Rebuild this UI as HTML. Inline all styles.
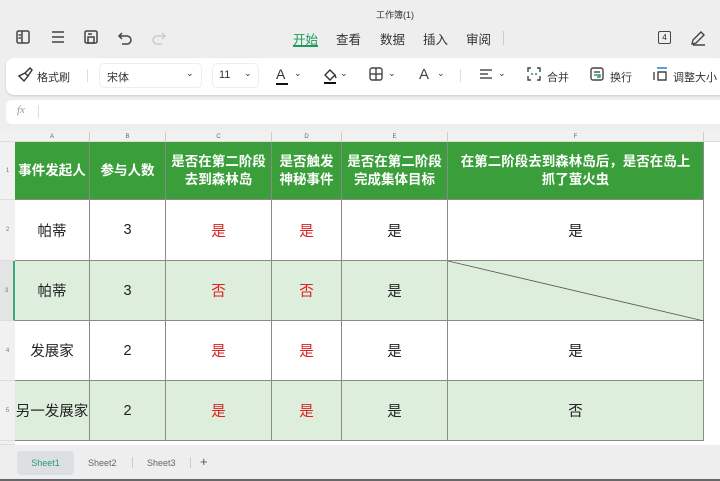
<!DOCTYPE html>
<html><head><meta charset="utf-8"><style>
*{margin:0;padding:0;box-sizing:border-box}
body{width:720px;height:481px;overflow:hidden;background:#eeeeee;font-family:"Liberation Sans","Noto Sans CJK SC",sans-serif;position:relative;color:#222}
.a{position:absolute}
.t{font-size:12px;color:#333}
.grid div.c{position:absolute;display:flex;align-items:center;justify-content:center;text-align:center;border-right:1px solid #8a8a8a;border-bottom:1px solid #8a8a8a;font-size:14.5px}
.h{background:#3a9e3a;color:#fff;font-weight:bold;font-size:13.5px!important;line-height:18px}
.g{background:#ddeedd}
.w{background:#fff}
.r{color:#e02020}
.rh{position:absolute;left:0;width:15px;background:#f1f1f1;border-bottom:1px solid #ddd;font-size:6px;color:#777;display:flex;align-items:center;justify-content:center}
.ch{position:absolute;top:132px;height:10px;font-size:6px;color:#666;text-align:center;border-right:1px solid #ccc;line-height:10px}
</style></head><body>
<div class="a" style="left:0;top:8px;width:790px;text-align:center;font-size:9px;color:#333">工作簿(1)</div>
<svg class="a" style="left:14px;top:27px" width="160" height="20" fill="none" stroke="#444" stroke-width="1.5">
<rect x="3" y="4" width="12" height="12" rx="1.5"/><line x1="8" y1="4" x2="8" y2="16"/><line x1="4.5" y1="8" x2="7" y2="8"/><line x1="4.5" y1="11" x2="7" y2="11"/>
<line x1="38" y1="5" x2="50" y2="5"/><line x1="38" y1="10" x2="50" y2="10"/><line x1="38" y1="15" x2="50" y2="15"/>
<rect x="71" y="4" width="12" height="12" rx="1.5"/><rect x="74" y="10" width="6" height="6"/><line x1="74" y1="7" x2="78" y2="7"/>
<path d="M108 6 L105 9 L108 12 M105 9 H113 a4 4 0 0 1 0 8 H108"/>
<path stroke="#ccc" d="M148 6 L151 9 L148 12 M151 9 H143 a4 4 0 0 0 0 8 H148"/>
</svg>
<div class="a" style="left:293px;top:29px;font-size:12.5px;color:#1e9a5a">开始</div>
<div class="a" style="left:293px;top:45px;width:25px;height:2px;background:#1e9a5a"></div>
<div class="a" style="left:336px;top:29px;font-size:12.5px;color:#333">查看</div>
<div class="a" style="left:380px;top:29px;font-size:12.5px;color:#333">数据</div>
<div class="a" style="left:423px;top:29px;font-size:12.5px;color:#333">插入</div>
<div class="a" style="left:466px;top:29px;font-size:12.5px;color:#333">审阅</div>
<div class="a" style="left:503px;top:31px;width:1px;height:14px;background:#ccc"></div>
<div class="a" style="left:658px;top:31px;width:13px;height:13px;border:1.3px solid #444;border-radius:2px;font-size:8px;text-align:center;line-height:11px">4</div>
<svg class="a" style="left:688px;top:28px" width="20" height="20" fill="none" stroke="#444" stroke-width="1.4"><path d="M4 16 L5 12 L13 4 L16 7 L8 15 Z M5 17 H17"/></svg>
<div class="a" style="left:6px;top:58px;width:720px;height:37px;background:#fff;border-radius:8px;box-shadow:0 1px 2px #ccc"></div>
<svg class="a" style="left:16px;top:66px" width="18" height="18" fill="none" stroke="#333" stroke-width="1.4"><path d="M3 10 L8 15 L12 10 L9 7 Z M9 7 L14 2 L16 4 L12 10"/></svg>
<div class="a t" style="left:37px;top:69px;font-size:11px">格式刷</div>
<div class="a" style="left:87px;top:69px;width:1px;height:13px;background:#ddd"></div>
<div class="a" style="left:99px;top:63px;width:103px;height:25px;border:1px solid #eee;border-radius:5px"></div>
<div class="a t" style="left:107px;top:69px;font-size:11px">宋体</div>
<div class="a t" style="left:186px;top:68px;font-size:9px">⌄</div>
<div class="a" style="left:212px;top:63px;width:47px;height:25px;border:1px solid #eee;border-radius:5px"></div>
<div class="a t" style="left:219px;top:69px;font-size:11px">11</div>
<div class="a t" style="left:244px;top:68px;font-size:9px">⌄</div>
<div class="a" style="left:276px;top:66px;font-size:14px;color:#333">A</div>
<div class="a" style="left:276px;top:83px;width:12px;height:2px;background:#111"></div>
<div class="a t" style="left:294px;top:68px;font-size:9px">⌄</div>
<svg class="a" style="left:321px;top:66px" width="18" height="20" fill="none" stroke="#333" stroke-width="1.4"><path d="M4 9 L9 4 L14 9 L9 14 Z M14 9 l1 3"/><rect x="3" y="16" width="12" height="2" fill="#111" stroke="none"/></svg>
<div class="a t" style="left:340px;top:68px;font-size:9px">⌄</div>
<svg class="a" style="left:368px;top:66px" width="16" height="16" fill="none" stroke="#444" stroke-width="1.4"><rect x="2" y="2" width="12" height="12" rx="2"/><line x1="8" y1="2" x2="8" y2="14"/><line x1="2" y1="8" x2="14" y2="8"/></svg>
<div class="a t" style="left:388px;top:68px;font-size:9px">⌄</div>
<div class="a" style="left:419px;top:66px;font-size:15px;color:#444">A</div>
<div class="a t" style="left:437px;top:68px;font-size:9px">⌄</div>
<div class="a" style="left:460px;top:69px;width:1px;height:13px;background:#ddd"></div>
<svg class="a" style="left:478px;top:66px" width="16" height="16" stroke="#444" stroke-width="1.4"><line x1="2" y1="4" x2="14" y2="4"/><line x1="2" y1="8" x2="10" y2="8"/><line x1="2" y1="12" x2="14" y2="12"/></svg>
<div class="a t" style="left:498px;top:68px;font-size:9px">⌄</div>
<svg class="a" style="left:526px;top:66px" width="16" height="16" fill="none" stroke="#444" stroke-width="1.4"><path d="M5 2 H2 V6 M11 2 H14 V6 M2 10 V14 H5 M14 10 V14 H11"/><circle cx="6" cy="8" r="1" fill="#1e9a5a" stroke="none"/><circle cx="10" cy="8" r="1" fill="#1e9a5a" stroke="none"/></svg>
<div class="a t" style="left:547px;top:69px;font-size:11px">合并</div>
<svg class="a" style="left:589px;top:66px" width="16" height="16" fill="none" stroke="#444" stroke-width="1.4"><rect x="2" y="2" width="12" height="12" rx="2"/><line x1="5" y1="6" x2="11" y2="6"/><path d="M5 9 H11 V11 H8" stroke="#1e9a5a"/></svg>
<div class="a t" style="left:610px;top:69px;font-size:11px">换行</div>
<svg class="a" style="left:652px;top:66px" width="18" height="16" fill="none" stroke="#444" stroke-width="1.4"><path d="M2 6 V14 M6 6 H14 V14 H6 Z" /><line x1="5" y1="2" x2="15" y2="2" stroke="#1e6fd0"/></svg>
<div class="a t" style="left:673px;top:69px;font-size:11px">调整大小</div>
<div class="a" style="left:6px;top:100px;width:720px;height:24px;background:#fff;border-radius:6px"></div>
<div class="a" style="left:17px;top:104px;font-size:11px;color:#999;font-style:italic;font-family:'Liberation Serif',serif">fx</div>
<div class="a" style="left:38px;top:105px;width:1px;height:13px;background:#ddd"></div>
<div class="a" style="left:0;top:131px;width:720px;height:314px;background:#fff"></div>
<div class="a" style="left:0;top:131px;width:720px;height:11px;background:#f1f1f1;border-bottom:1px solid #ddd"></div>
<div class="ch" style="left:15px;width:75px">A</div>
<div class="ch" style="left:90px;width:76px">B</div>
<div class="ch" style="left:166px;width:106px">C</div>
<div class="ch" style="left:272px;width:70px">D</div>
<div class="ch" style="left:342px;width:106px">E</div>
<div class="ch" style="left:448px;width:256px">F</div>
<div class="rh" style="top:142px;height:58px">1</div>
<div class="rh" style="top:200px;height:61px">2</div>
<div class="rh" style="top:261px;height:60px;background:#e4e4e4;border-right:2px solid #3aaa7a">3</div>
<div class="rh" style="top:321px;height:60px">4</div>
<div class="rh" style="top:381px;height:60px">5</div>
<div class="rh" style="top:441px;height:4px"></div>
<div class="grid">
<div class="c h" style="left:15px;top:142px;width:75px;height:58px">事件发起人</div>
<div class="c h" style="left:90px;top:142px;width:76px;height:58px">参与人数</div>
<div class="c h" style="left:166px;top:142px;width:106px;height:58px">是否在第二阶段<br>去到森林岛</div>
<div class="c h" style="left:272px;top:142px;width:70px;height:58px">是否触发<br>神秘事件</div>
<div class="c h" style="left:342px;top:142px;width:106px;height:58px">是否在第二阶段<br>完成集体目标</div>
<div class="c h" style="left:448px;top:142px;width:256px;height:58px">在第二阶段去到森林岛后，是否在岛上<br>抓了萤火虫</div>

<div class="c w" style="left:15px;top:200px;width:75px;height:61px">帕蒂</div>
<div class="c w" style="left:90px;top:200px;width:76px;height:61px">3</div>
<div class="c w r" style="left:166px;top:200px;width:106px;height:61px">是</div>
<div class="c w r" style="left:272px;top:200px;width:70px;height:61px">是</div>
<div class="c w" style="left:342px;top:200px;width:106px;height:61px">是</div>
<div class="c w" style="left:448px;top:200px;width:256px;height:61px">是</div>

<div class="c g" style="left:15px;top:261px;width:75px;height:60px">帕蒂</div>
<div class="c g" style="left:90px;top:261px;width:76px;height:60px">3</div>
<div class="c g r" style="left:166px;top:261px;width:106px;height:60px">否</div>
<div class="c g r" style="left:272px;top:261px;width:70px;height:60px">否</div>
<div class="c g" style="left:342px;top:261px;width:106px;height:60px">是</div>
<div class="c g" style="left:448px;top:261px;width:256px;height:60px"><svg class="a" style="left:0;top:0" width="256" height="60"><line x1="0" y1="0" x2="256" y2="60" stroke="#555" stroke-width="0.8"/></svg></div>

<div class="c w" style="left:15px;top:321px;width:75px;height:60px">发展家</div>
<div class="c w" style="left:90px;top:321px;width:76px;height:60px">2</div>
<div class="c w r" style="left:166px;top:321px;width:106px;height:60px">是</div>
<div class="c w r" style="left:272px;top:321px;width:70px;height:60px">是</div>
<div class="c w" style="left:342px;top:321px;width:106px;height:60px">是</div>
<div class="c w" style="left:448px;top:321px;width:256px;height:60px">是</div>

<div class="c g" style="left:15px;top:381px;width:75px;height:60px">另一发展家</div>
<div class="c g" style="left:90px;top:381px;width:76px;height:60px">2</div>
<div class="c g r" style="left:166px;top:381px;width:106px;height:60px">是</div>
<div class="c g r" style="left:272px;top:381px;width:70px;height:60px">是</div>
<div class="c g" style="left:342px;top:381px;width:106px;height:60px">是</div>
<div class="c g" style="left:448px;top:381px;width:256px;height:60px">否</div>
</div>
<div class="a" style="left:0;top:445px;width:720px;height:36px;background:#eeeeee;border-bottom:2px solid #666"></div>
<div class="a" style="left:17px;top:451px;width:57px;height:24px;background:#dde0e3;border-radius:4px;font-size:9px;color:#2a9a6a;text-align:center;line-height:24px">Sheet1</div>
<div class="a" style="left:88px;top:458px;font-size:9px;color:#666">Sheet2</div>
<div class="a" style="left:132px;top:457px;width:1px;height:11px;background:#ccc"></div>
<div class="a" style="left:147px;top:458px;font-size:9px;color:#666">Sheet3</div>
<div class="a" style="left:190px;top:457px;width:1px;height:11px;background:#ccc"></div>
<div class="a" style="left:200px;top:454px;font-size:13px;color:#555">+</div>
</body></html>
